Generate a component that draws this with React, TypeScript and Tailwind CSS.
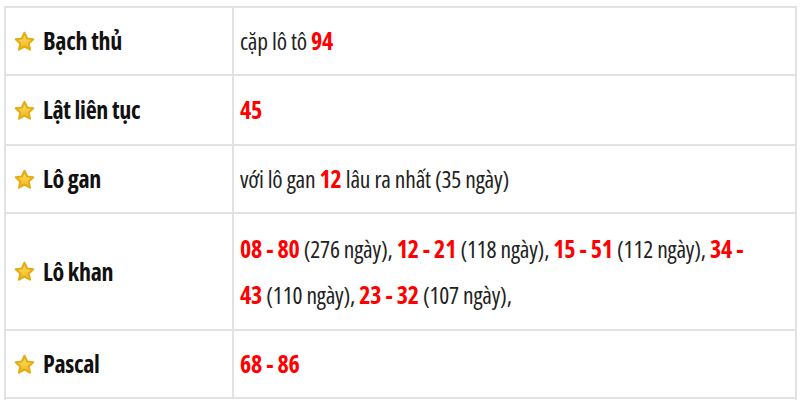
function Star() {
  return (
    <svg width="21" height="21" viewBox="0 0 24 24" className="shrink-0">
      <defs>
        <linearGradient id="sg" x1="0" y1="0" x2="0" y2="1">
          <stop offset="0" stopColor="#ffe070" />
          <stop offset="1" stopColor="#f0b818" />
        </linearGradient>
      </defs>
      <path
        d="M12 2 L15 8.6 L22 9.4 L16.8 14.2 L18.3 21.3 L12 17.7 L5.7 21.3 L7.2 14.2 L2 9.4 L9 8.6 Z"
        fill="url(#sg)"
        stroke="#e3ad14"
        strokeWidth="2.4"
        strokeLinejoin="round"
      />
    </svg>
  );
}

function R({ children }: { children: React.ReactNode }) {
  return <span className="font-bold text-[#ff0000] text-[24px]">{children}</span>;
}

function Row({ label, h, last, children }: { label: string; h: string; last?: boolean; children: React.ReactNode }) {
  return (
    <div className={`flex ${h} ${last ? '' : 'border-b-2'} border-[#e2e2e2]`}>
      <div className="w-[228px] shrink-0 flex items-center gap-[8px] pl-[8px] border-r-2 border-[#e2e2e2]">
        <Star />
        <span className="font-bold text-[#111111] text-[24px] tracking-[-0.3px]">{label}</span>
      </div>
      <div className="flex-1 flex items-center pl-[6px] pr-[8px] text-[#222222] text-[23.5px] leading-[45px] tracking-[-0.2px]">
        <div>{children}</div>
      </div>
    </div>
  );
}

export default function App() {
  return (
    <div className="w-[800px] h-[400px] bg-white overflow-hidden pt-[6px] pl-[4px] pr-[3px] font-['Open_Sans',sans-serif] [font-stretch:75%]">
      <div className="border-2 border-[#e2e2e2] flex flex-col">
        <Row label="Bạch thủ" h="h-[68px]">
          cặp lô tô <R>94</R>
        </Row>
        <Row label="Lật liên tục" h="h-[70px]">
          <R>45</R>
        </Row>
        <Row label="Lô gan" h="h-[68px]">
          với lô gan <R>12</R> lâu ra nhất (35 ngày)
        </Row>
        <Row label="Lô khan" h="h-[117px]">
          <R>08 - 80</R> (276 ngày), <R>12 - 21</R> (118 ngày), <R>15 - 51</R> (112 ngày), <R>34 -</R>
          <br />
          <R>43</R> (110 ngày), <R>23 - 32</R> (107 ngày),
        </Row>
        <Row label="Pascal" h="h-[68px]">
          <R>68 - 86</R>
        </Row>
        <div className="h-[20px]" />
      </div>
    </div>
  );
}
